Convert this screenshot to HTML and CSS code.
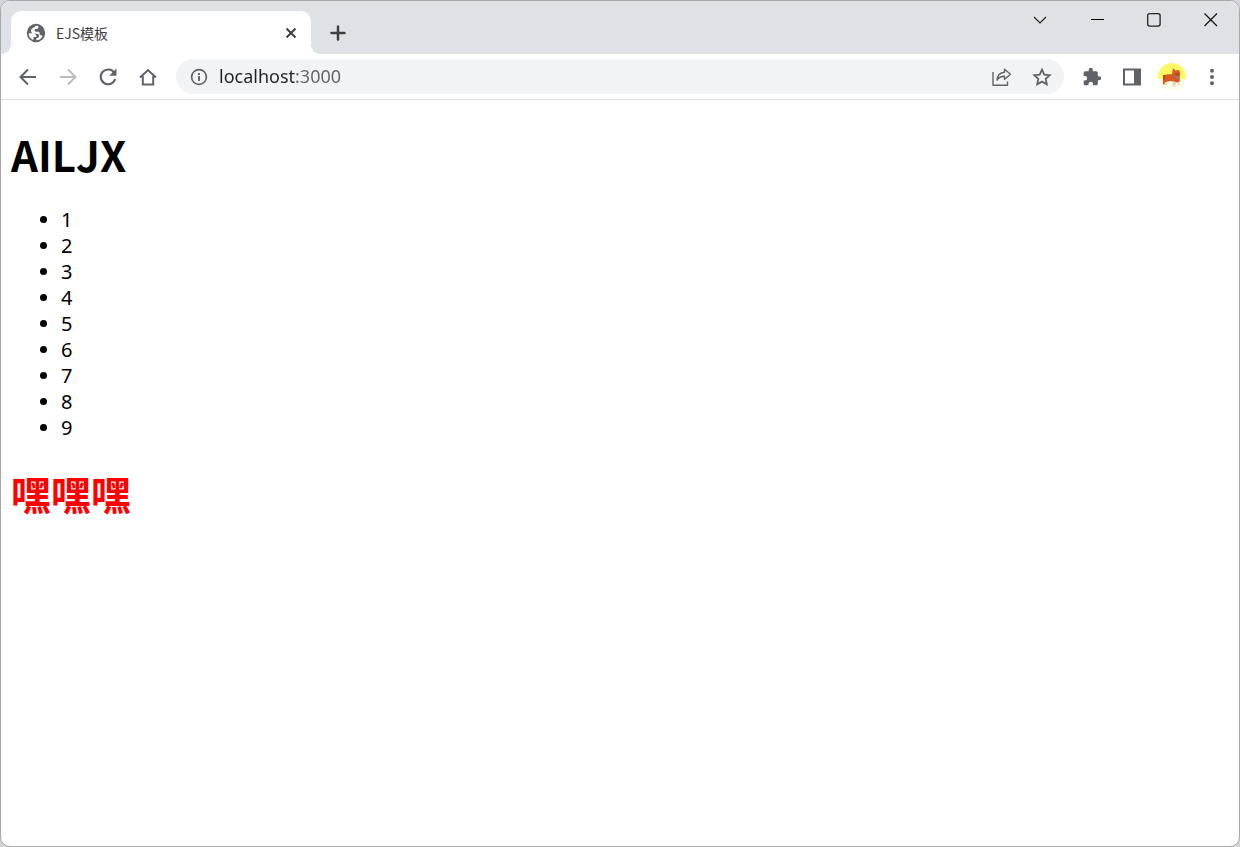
FILE: index.html
```html
<!DOCTYPE html>
<html lang="zh-CN">
<head>
<meta charset="utf-8">
<title>EJS模板</title>
<link rel="stylesheet" href="styles.css">
</head>
<body>
<div class="window">
  <header class="tabstrip">
    <div class="tab">
      <svg class="favicon" viewBox="0 0 24 24" width="22" height="22" aria-hidden="true"><circle cx="12" cy="12" r="10" fill="#5f6368"/><path fill="#fff" d="M4 12.200h4.500c2.800 0 4.200 1.500 4 4.200H9.200v3.100A8 8 0 0 1 4 12.200zM14.500 4.400V6c0 1-.8 1.700-1.800 1.700h-2v1.600c0 .8.500 1.200 1.300 1.200h2.200c1.200 0 1.800.7 1.800 1.800v2c1.600 0 2.600.4 3 1.200a8 8 0 0 1-6.600 4.500v-2.200c2-.2 3-1.200 3-2.700 0-1.300-.8-2-2.400-2.200L9 12.400c-1.600-.3-2.400-1.300-2.400-2.800 0-2.200 1.500-3.300 3.500-3.600.3-1 1-1.600 2-1.900z"/></svg>
      <span class="tab-title">EJS模板</span>
      <button class="icon-button tab-close" aria-label="关闭标签页"><svg viewBox="0 0 12 12" width="12" height="12"><path d="M1.500 1.500l9 9m0-9l-9 9" fill="none" stroke="#3c4043" stroke-width="2"/></svg></button>
    </div>
    <button class="icon-button new-tab" aria-label="新标签页"><svg viewBox="0 0 16 16" width="16" height="16"><path d="M8 1.500v13M1.500 8h13" fill="none" stroke="#3c4043" stroke-width="2.500" stroke-linecap="round"/></svg></button>
    <div class="window-controls">
      <button class="icon-button" aria-label="搜索标签页"><svg viewBox="0 0 16 16" width="16" height="16"><path d="M2 5l6 6 6-6" fill="none" stroke="#222" stroke-width="1.200"/></svg></button>
      <button class="icon-button" aria-label="最小化"><svg viewBox="0 0 16 16" width="16" height="16"><path d="M2 7.500h13" fill="none" stroke="#000" stroke-width="1"/></svg></button>
      <button class="icon-button" aria-label="最大化"><svg viewBox="0 0 16 16" width="16" height="16"><rect x="1.700" y="1.700" width="12.400" height="12.400" rx="2" fill="none" stroke="#222" stroke-width="1.300"/></svg></button>
      <button class="icon-button" aria-label="关闭"><svg viewBox="0 0 16 16" width="16" height="16"><path d="M1.500 1.500l12.500 12.500m0-12.500l-12.500 12.500" fill="none" stroke="#111" stroke-width="1.200"/></svg></button>
    </div>
  </header>
  <nav class="toolbar">
    <button class="icon-button tool" aria-label="后退"><svg viewBox="0 0 20 20" width="20" height="20"><path d="M18 10H3M10 2.500L2.500 10l7.500 7.500" fill="none" stroke="#5f6368" stroke-width="2"/></svg></button>
    <button class="icon-button tool" aria-label="前进" disabled><svg viewBox="0 0 20 20" width="20" height="20"><path d="M2 10h15M10 2.500l7.500 7.500-7.500 7.500" fill="none" stroke="#babcbe" stroke-width="2"/></svg></button>
    <button class="icon-button tool" aria-label="重新加载"><svg viewBox="0 0 20 20" width="20" height="20"><path d="M16.300 5.800A7.400 7.400 0 1 0 17.200 12" fill="none" stroke="#5f6368" stroke-width="2.100"/><path d="M18.500 1.500v7.300h-7.300z" fill="#5f6368"/></svg></button>
    <button class="icon-button tool" aria-label="主页"><svg viewBox="0 0 20 20" width="20" height="20"><path d="M2 10.500L10 3l8 7.500M4.800 9v8.500h10.400V9" fill="none" stroke="#5f6368" stroke-width="2"/></svg></button>
    <div class="address">
      <button class="icon-button" aria-label="查看网站信息"><svg viewBox="0 0 18 18" width="18" height="18"><circle cx="9" cy="9" r="7.400" fill="none" stroke="#5f6368" stroke-width="1.700"/><path d="M9 8v5M9 5v1.900" stroke="#5f6368" stroke-width="1.900"/></svg></button>
      <input class="url" type="text" value="localhost:3000" aria-label="地址和搜索栏" spellcheck="false">
      <button class="icon-button tool" aria-label="分享"><svg viewBox="0 0 20 20" width="20" height="20"><path d="M1 5v13.200h14.500v-3.700M12.500 5.200V2.200l6 5-6 5V9.300C9 9.200 6.800 10.500 5 13.200c.3-4.500 3-7.600 7.500-8z" fill="none" stroke="#5f6368" stroke-width="1.400" stroke-linejoin="round"/></svg></button>
      <button class="icon-button tool" aria-label="为此标签页添加书签"><svg viewBox="0 0 20 20" width="20" height="20"><path d="M10 2.600l2.300 5 5.400.6-4 3.700 1.100 5.400-4.800-2.700-4.800 2.700 1.100-5.400-4-3.700 5.400-.6z" fill="none" stroke="#5f6368" stroke-width="1.800"/></svg></button>
    </div>
    <button class="icon-button tool" aria-label="扩展程序"><svg viewBox="0 0 24 24" width="20" height="20"><path fill="#5f6368" d="M20.500 11H19V7a2 2 0 0 0-2-2h-4V3.500a2.500 2.500 0 0 0-5 0V5H4a2 2 0 0 0-2 2v3.800h1.500a2.700 2.700 0 0 1 0 5.400H2V20a2 2 0 0 0 2 2h3.800v-1.500a2.700 2.700 0 0 1 5.400 0V22H17a2 2 0 0 0 2-2v-4h1.500a2.500 2.500 0 0 0 0-5z"/></svg></button>
    <button class="icon-button tool" aria-label="侧边栏"><svg viewBox="0 0 20 20" width="20" height="20"><path fill="#5f6368" fill-rule="evenodd" d="M1 1.500h18v17H1zM3 3.500v13h9v-13z"/></svg></button>
    <button class="icon-button profile" aria-label="个人资料"><svg viewBox="0 0 28 28" width="28" height="28"><defs><clipPath id="disc"><circle cx="14" cy="14" r="14"/></clipPath></defs><g clip-path="url(#disc)"><path fill="#fff866" d="M0 0h28v16H0z"/><path fill="#fffde8" d="M0 16h28v12H0z"/></g><path fill="#d9581f" d="M5 12.500c3-1.200 6-1.500 9-1.200L15 5l2.500 2.500L21 7l1.200 3-.7 9-3.500.5-4-1.500-5 .5-2 3H5z"/><path fill="#a94b24" d="M5 12.500l2-.7v4.200l-2 2zM17 11l5-1-2 3h-3z"/><path fill="#8d8580" d="M17 12.500l4 .5-.5 3-3-1z"/><path fill="#f2d3ae" d="M7 19h2v3H6zM14 18l4 1-.5 4.500H15zM19 19h2l1 3h-2z"/></svg></button>
    <button class="icon-button tool" aria-label="自定义及控制"><svg viewBox="0 0 20 20" width="20" height="20"><g fill="#5f6368"><circle cx="10" cy="3.800" r="2"/><circle cx="10" cy="10" r="2"/><circle cx="10" cy="16.200" r="2"/></g></svg></button>
  </nav>
  <main class="page">
    <h1 class="heading heading-latin">AILJX</h1>
    <ul class="list">
      <li>1</li>
      <li>2</li>
      <li>3</li>
      <li>4</li>
      <li>5</li>
      <li>6</li>
      <li>7</li>
      <li>8</li>
      <li>9</li>
    </ul>
    <h1 class="heading heading-red">嘿嘿嘿</h1>
  </main>
</div>
</body>
</html>
```
FILE: styles.css
```css
* {
  box-sizing: border-box;
}

body {
  margin: 0;
  background: #d5d5d5;
  color: #000;
  font-family: "Noto Sans", "Noto Sans CJK SC", sans-serif;
}

.window {
  display: flex;
  flex-direction: column;
  min-height: 100vh;
  overflow: hidden;
  border: 1px solid #a8a8a8;
  border-radius: 10px;
  background: #fff;
}

.icon-button {
  display: flex;
  flex: none;
  align-items: center;
  justify-content: center;
  padding: 0;
  border: 0;
  background: none;
}

.tabstrip {
  display: flex;
  height: 53px;
  padding-left: 10px;
  background: #dee1e6;
}

.tab {
  position: relative;
  display: flex;
  align-items: center;
  width: 300px;
  margin-top: 10px;
  padding: 0 14px;
  border-radius: 10px 10px 0 0;
  background: #fff;
}

.tab::before,
.tab::after {
  position: absolute;
  bottom: 0;
  width: 10px;
  height: 10px;
  content: "";
}

.tab::before {
  right: 100%;
  background: radial-gradient(circle at 0 0, #dee1e6 10px, #fff 10px);
}

.tab::after {
  left: 100%;
  background: radial-gradient(circle at 100% 0, #dee1e6 10px, #fff 10px);
}

.tab-title {
  flex: 1;
  padding-left: 9px;
  color: #3c4043;
  font-family: "Noto Sans CJK SC", sans-serif;
  font-size: 14px;
  line-height: 20px;
}

.new-tab {
  width: 34px;
  margin: 10px 0 0 10px;
}

.window-controls {
  display: flex;
  gap: 1px;
  height: 37px;
  margin-left: auto;
}

.window-controls .icon-button {
  width: 56px;
}

.toolbar {
  display: flex;
  align-items: center;
  height: 46px;
  padding: 0 7px;
  border-bottom: 1px solid #dadce0;
}

.tool {
  width: 40px;
  height: 36px;
}

.address {
  display: flex;
  flex: 1;
  align-items: center;
  min-width: 0;
  height: 35px;
  margin: 0 8px;
  padding: 0 2px 0 14px;
  border-radius: 18px;
  background: #f1f3f4;
}

.url {
  flex: 1;
  min-width: 0;
  height: 28px;
  margin-left: 11px;
  padding: 0 0 2px;
  border: 0;
  outline: 0;
  background: linear-gradient(90deg, #202124 76px, #5f6368 76px);
  background-clip: text;
  color: transparent;
  font-family: "Noto Sans", sans-serif;
  font-size: 18px;
}

.profile {
  width: 40px;
}

.page {
  flex: 1;
  padding: 0 10px;
  font-size: 20px;
  line-height: 26px;
}

.heading {
  margin: 27px 0;
  font-size: 40px;
  font-weight: 700;
  line-height: 53px;
}

.heading-latin {
  font-family: "Noto Sans CJK SC", sans-serif;
  font-size: 42px;
}

.heading-red {
  color: #f00;
}

.list {
  margin: 20px 0;
  padding-left: 50px;
}
```
